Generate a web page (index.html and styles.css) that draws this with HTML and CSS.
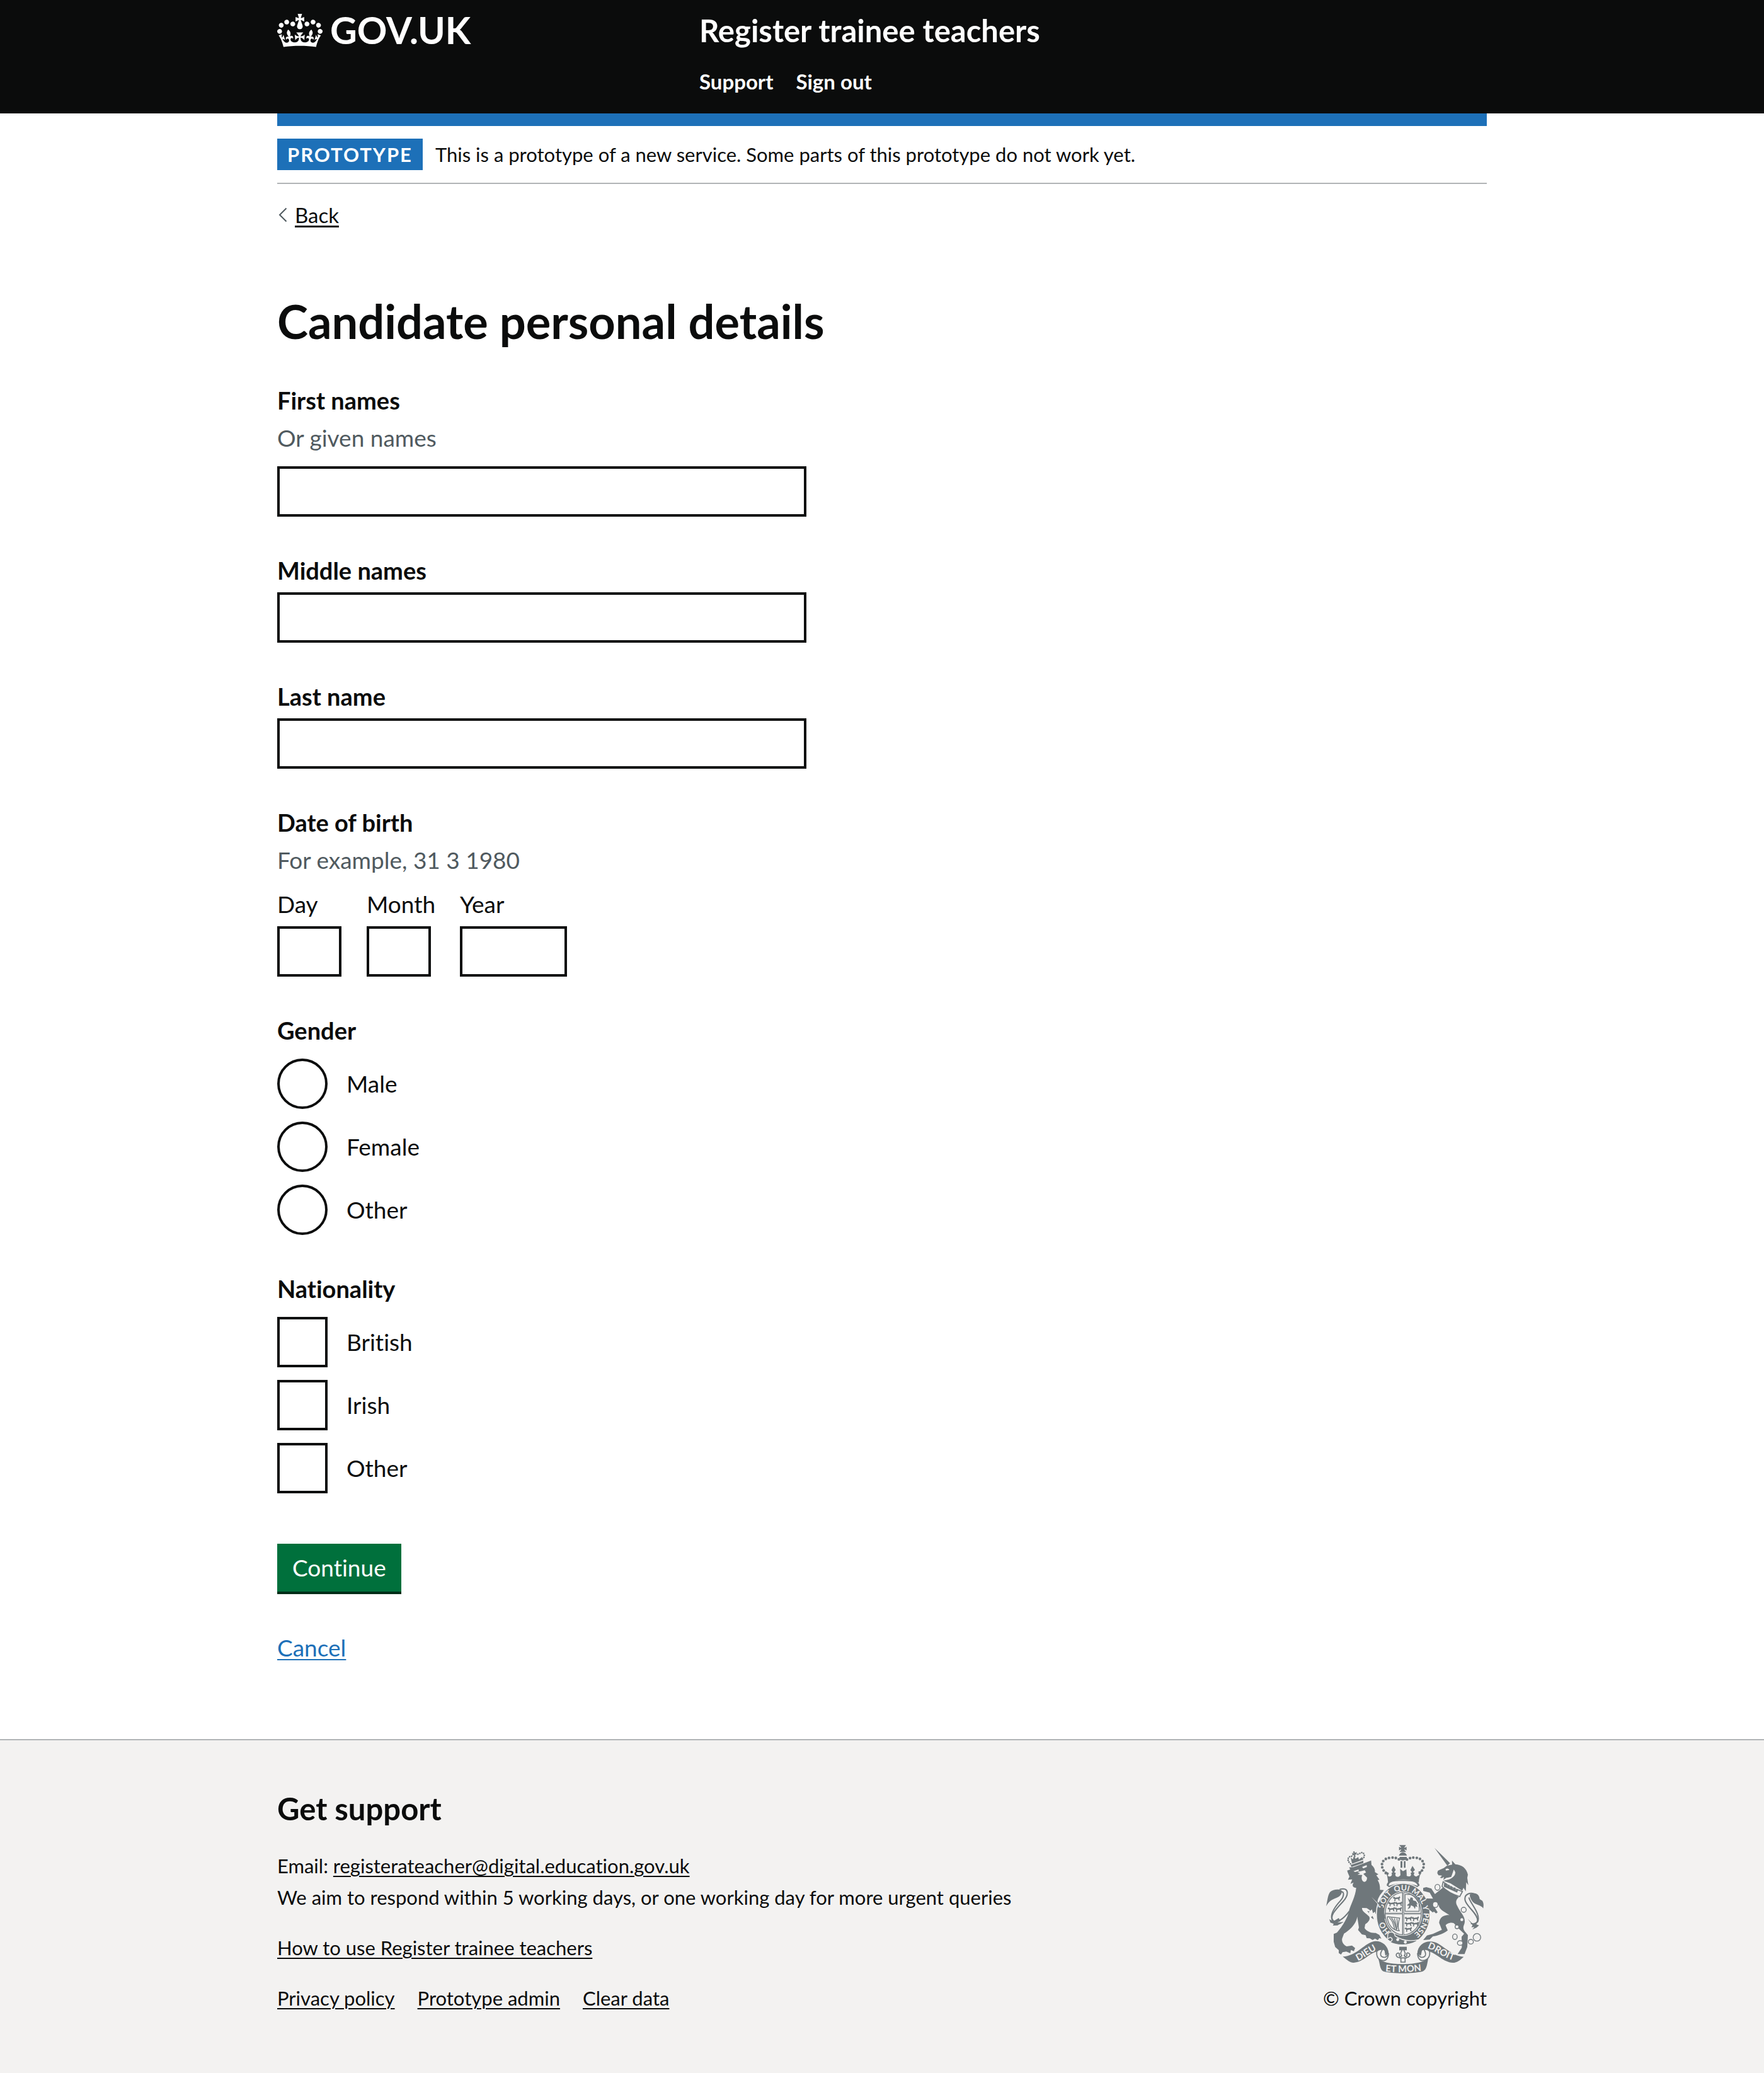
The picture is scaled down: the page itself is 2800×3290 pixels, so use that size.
FILE: index.html
```html
<!DOCTYPE html>
<html lang="en">
<head>
<meta charset="utf-8">
<meta name="viewport" content="width=device-width, initial-scale=1">
<title>Candidate personal details - Register trainee teachers</title>
<link rel="stylesheet" href="styles.css">
</head>
<body>
<header class="header">
  <div class="container header-grid">
    <a class="logo" href="#">
      <svg class="logo-crown" viewBox="0 0 132 97" aria-hidden="true"><path fill="currentColor" fill-rule="evenodd" d="M25 30.2c3.5 1.5 7.7-.2 9.1-3.7 1.5-3.6-.2-7.8-3.9-9.2-3.6-1.4-7.6.3-9.1 3.9-1.4 3.5.3 7.5 3.9 9zM9 39.5c3.6 1.5 7.8-.2 9.2-3.7 1.5-3.6-.2-7.8-3.9-9.1-3.6-1.5-7.6.2-9.1 3.8-1.4 3.5.3 7.5 3.8 9zM4.4 57.2c3.5 1.5 7.7-.2 9.1-3.8 1.5-3.6-.2-7.7-3.9-9.1-3.5-1.5-7.6.3-9.1 3.8-1.4 3.5.3 7.6 3.9 9.1zm38.3-21.4c3.5 1.5 7.7-.2 9.1-3.8 1.5-3.6-.2-7.7-3.9-9.1-3.6-1.5-7.6.3-9.1 3.8-1.3 3.6.4 7.7 3.9 9.1zm64.4-5.6c-3.6 1.5-7.8-.2-9.1-3.7-1.5-3.6.2-7.8 3.8-9.2 3.6-1.4 7.7.3 9.2 3.9 1.3 3.5-.4 7.5-3.9 9zm15.9 9.3c-3.6 1.5-7.7-.2-9.1-3.7-1.5-3.6.2-7.8 3.7-9.1 3.6-1.5 7.7.2 9.2 3.8 1.5 3.5-.3 7.5-3.8 9zm4.7 17.7c-3.6 1.5-7.8-.2-9.2-3.8-1.5-3.6.2-7.7 3.9-9.1 3.6-1.5 7.7.3 9.2 3.8 1.3 3.5-.4 7.6-3.9 9.1zM89.3 35.8c-3.6 1.5-7.8-.2-9.2-3.8-1.4-3.6.2-7.7 3.9-9.1 3.6-1.5 7.7.3 9.2 3.8 1.4 3.6-.3 7.7-3.9 9.1zM69.7 17.7l8.9 4.7V9.3l-8.9 2.8c-.2-.3-.5-.6-.9-.9L72.4 0H59.6l3.5 11.2c-.3.3-.6.5-.9.9l-8.8-2.8v13.1l8.8-4.7c.3.3.6.7.9.9l-5 15.4v.1c-.2.8-.4 1.6-.4 2.4 0 4.1 3.1 7.5 7 8.1h.2c.3 0 .7.1 1 .1.4 0 .7 0 1-.1h.2c4-.6 7.1-4.1 7.1-8.1 0-.8-.1-1.7-.4-2.4V34l-5.1-15.4c.4-.2.7-.6 1-.9zM66 92.8c16.9 0 32.8 1.1 47.1 3.2 4-16.9 8.9-26.7 14-33.5l-9.6-3.4c1 4.9 1.1 7.2 0 10.2-1.5-1.4-3-4.3-4.2-8.7L108.6 76c2.8-2 5-3.2 7.5-3.3-4.4 9.4-10 11.9-13.6 11.2-4.3-.8-6.3-4.6-5.6-7.9 1-4.7 5.7-5.9 8-.5 4.3-8.7-3-11.4-7.6-8.8 7.1-7.2 7.9-13.5 2.1-21.1-8 6.1-8.1 12.3-4.5 20.8-4.7-5.4-12.1-2.5-9.5 6.2 3.4-5.2 7.9-2 7.2 3.1-.6 4.3-6.4 7.8-13.5 7.2-10.3-.9-10.9-8-11.2-13.8 2.5-.5 7.1 1.8 11 7.3L80.2 60c-4.1 4.4-8 5.3-12.3 5.4 1.4-4.4 8-11.6 8-11.6H55.5s6.4 7.2 7.9 11.6c-4.2-.1-8-1-12.3-5.4l1.4 16.4c3.9-5.5 8.5-7.7 10.9-7.3-.3 5.8-.9 12.8-11.1 13.8-7.2.6-12.9-2.9-13.5-7.2-.7-5 3.8-8.3 7.1-3.1 2.7-8.7-4.6-11.6-9.4-6.2 3.7-8.5 3.6-14.7-4.6-20.8-5.8 7.6-5 13.9 2.2 21.1-4.7-2.6-11.9.1-7.7 8.8 2.3-5.5 7.1-4.2 8.1.5.7 3.3-1.3 7.1-5.7 7.9-3.5.7-9-1.8-13.5-11.2 2.5.1 4.7 1.3 7.5 3.3l-4.7-15.4c-1.2 4.4-2.7 7.2-4.3 8.7-1.1-3-.9-5.3 0-10.2l-9.5 3.4c5 6.9 9.9 16.7 14 33.5 14.8-2.1 30.8-3.2 47.7-3.2z"/></svg>
      <span>GOV.UK</span>
    </a>
    <div class="header-content">
      <a class="service-name" href="#">Register trainee teachers</a>
      <nav class="header-nav" aria-label="Account">
        <a href="#">Support</a>
        <a href="#">Sign out</a>
      </nav>
    </div>
  </div>
</header>
<div class="container">
  <div class="blue-bar"></div>
  <div class="phase-banner">
    <strong class="tag">PROTOTYPE</strong>
    <span>This is a prototype of a new service. Some parts of this prototype do not work yet.</span>
  </div>
  <a class="back-link" href="#"><svg class="chevron" viewBox="0 0 14 24" aria-hidden="true"><path d="M12.500 1.500L2 12L12.500 22.500"/></svg><span>Back</span></a>
  <main class="main">
    <h1>Candidate personal details</h1>
    <form class="form">
      <div class="field">
        <label class="label" for="first">First names</label>
        <div class="hint" id="first-hint">Or given names</div>
        <input class="input" id="first" type="text" aria-describedby="first-hint">
      </div>
      <div class="field">
        <label class="label" for="middle">Middle names</label>
        <input class="input" id="middle" type="text">
      </div>
      <div class="field">
        <label class="label" for="last">Last name</label>
        <input class="input" id="last" type="text">
      </div>
      <fieldset class="field">
        <legend class="label">Date of birth</legend>
        <div class="hint">For example, 31 3 1980</div>
        <div class="date">
          <div><label class="date-label" for="day">Day</label><input class="input" id="day" type="text" inputmode="numeric"></div>
          <div><label class="date-label" for="month">Month</label><input class="input input-short" id="month" type="text" inputmode="numeric"></div>
          <div><label class="date-label" for="year">Year</label><input class="input" id="year" type="text" inputmode="numeric"></div>
        </div>
      </fieldset>
      <fieldset class="field">
        <legend class="label">Gender</legend>
        <div class="options">
          <label class="option"><input class="radio" type="radio" name="gender"><span>Male</span></label>
          <label class="option"><input class="radio" type="radio" name="gender"><span>Female</span></label>
          <label class="option"><input class="radio" type="radio" name="gender"><span>Other</span></label>
        </div>
      </fieldset>
      <fieldset class="field">
        <legend class="label">Nationality</legend>
        <div class="options">
          <label class="option"><input class="checkbox" type="checkbox" name="nationality"><span>British</span></label>
          <label class="option"><input class="checkbox" type="checkbox" name="nationality"><span>Irish</span></label>
          <label class="option"><input class="checkbox" type="checkbox" name="nationality"><span>Other</span></label>
        </div>
      </fieldset>
      <div class="actions">
        <button class="button" type="submit">Continue</button>
        <a class="cancel" href="#">Cancel</a>
      </div>
    </form>
  </main>
</div>
<footer class="footer">
  <div class="container footer-row">
    <div class="footer-text">
      <h2>Get support</h2>
      <p>Email: <a href="#">registerateacher@digital.education.gov.uk</a><br>We aim to respond within 5 working days, or one working day for more urgent queries</p>
      <p><a href="#">How to use Register trainee teachers</a></p>
      <div class="footer-links">
        <a href="#">Privacy policy</a>
        <a href="#">Prototype admin</a>
        <a href="#">Clear data</a>
      </div>
    </div>
    <a class="copyright" href="#">
      <svg class="arms" viewBox="132 84 750 612" aria-hidden="true">
        <defs>
          <path id="garter" d="M499 523A97 111 0 0 1 499 301A97 111 0 0 1 499 523"/>
          <path id="dieu" d="M270 641C310 628 335 600 386 577"/>
          <path id="mon" d="M400 685Q497 696 600 681"/>
          <path id="droit" d="M604 573C650 584 690 622 746 636"/>
          <g id="passant"><path d="M0 8l7-6 5 5 16-2 5-5 3 7-4 4v8l5 2h-9l-2-8-12 1-2 6 3 3h-8l2-9-4-2z"/></g>
        </defs>
        <!-- lion -->
        <path class="line" d="M196 296C244 283 240 323 212 354C170 399 149 424 164 443C178 460 212 440 242 400"/>
        <path class="line" d="M190 312C224 294 218 329 200 350C166 387 145 424 166 452"/>
        <path d="M132 376C138 352 139 325 150 309C166 293 193 294 205 300C211 315 198 330 183 335C157 344 143 355 132 376ZM147 438L166 448L192 432L200 447L185 454L215 451C202 461 191 464 187 467L164 468L168 460L152 454Z"/>
        <path d="M232 206L247 201L241 191L262 190L300 176L346 158L348 179C362 190 366 205 364 213L381 224L371 229L386 250L377 251C388 268 389 285 388 298L407 299L388 324C380 338 374 350 378 358L395 379L411 420L409 442L397 436L390 445L380 436L372 442L368 430L356 437L345 428L357 420L339 412L328 400L345 398L325 385L303 384C301 400 322 410 337 425C345 440 329 455 318 462L315 480C325 495 345 505 368 503L385 512L395 530L385 528L378 538L365 530L353 537L340 529L325 528L320 514L302 510L284 489L288 477L280 425C276 460 245 490 217 506L208 530C205 545 215 560 230 567L255 563L270 575L264 590L250 584L247 600L228 592L210 595L203 606L192 599L192 585L175 570L168 545L168 508L183 502C203 480 237 430 241 397C248 370 272 330 275 288C262 288 252 280 263 263L248 269L256 248L236 250L243 235L235 216Z"/>
        <g class="cut">
          <path d="M262 209L286 201L288 208L270 213ZM303 189L325 180L326 189L309 196ZM281 213L316 205L322 215L309 222L327 240Q326 260 313 260Q300 256 301 237L304 227L281 226L294 219Z"/>
          <path d="M347 331L401 384L413 418L405 418L394 384ZM332 387L338 402L350 391L355 409L365 402L367 413L375 399L391 421L383 439L369 434L358 435L352 420L338 415Z"/>
        </g>
        <path d="M248 180L309 159L309 170L253 189ZM260 116l7-2 2 8 9-4-2 14-6-4 2 14-5 1-4-12-6 5-1-15 7 5zM252 159l-3-15 10 9 5-16 8 13 13-8 3 12 16-13 1 14-49 18z"/>
        <path class="pearls small" d="M248 174C230 158 234 142 251 137L261 143M305 151C318 142 316 124 303 120L282 129"/>
        <!-- crown -->
        <path d="M480 85h32l-7 10v3l10-5v17l-10-5v3l8 10h-32l8-10v-3l-10 5v-17l10 5v-3zM478 135q5-15 19-16 15 1 20 16zM482 141h34v13l-19 4-17-4zM486 161h9v32h-9zM502 161h8v32h-8z"/>
        <path class="pearls" d="M416 218C389 193 388 150 438 145C463 143 473 149 480 154M578 218C606 193 606 150 558 145C533 143 524 149 516 154"/>
        <path d="M411 207C423 222 425 241 427 264Q497 233 573 263Q574 232 589 207L571 211L577 226L561 235C549 232 547 225 553 217L545 213L555 203L543 184L533 204L541 214L534 218C541 229 531 239 516 232L506 220L516 231L514 200L498 209L484 198L486 231L493 221L479 235C467 239 456 230 464 218L456 214L463 203L453 184L443 204L449 214L443 218C450 230 437 239 425 232L431 218Z"/>
        <path d="M420 277C424 249 455 250 497 250C540 250 570 249 577 277L565 286Q500 256 432 286Z"/>
        <path class="cut" d="M430 279C430 257 459 256 497 256C534 256 564 257 568 279Q497 253 430 279Z"/>
        <!-- garter and shield -->
        <ellipse class="halo" cx="499" cy="415" rx="128" ry="148"/>
        <ellipse class="cut" cx="499" cy="411" rx="91" ry="106"/>
        <ellipse cx="499" cy="411" rx="88" ry="103"/>
        <ellipse class="cut" cx="499" cy="411" rx="84" ry="99"/>
        <path d="M494 309h9v204h-9zM414 407h170v8H414z"/>
        <path class="cut" d="M498 309h2v204h-2zM414 410h170v2H414z"/>
        <g>
          <use href="#passant" x="449" y="328"/><use href="#passant" x="426" y="353"/><use href="#passant" x="459" y="353"/><use href="#passant" x="424" y="379"/><use href="#passant" x="457" y="379"/>
          <use href="#passant" x="505" y="424"/><use href="#passant" x="538" y="424"/><use href="#passant" x="505" y="449"/><use href="#passant" x="538" y="449"/><use href="#passant" x="505" y="474"/>
          <path class="thin" d="M508 320V400H575V359Q560 328 534 320ZM423 426L482 432C475 455 470 478 480 493C450 492 425 464 423 426M433 431C447 443 450 455 459 488M443 432C455 444 458 458 467 489M457 434L470 485M469 435L473 476"/>
          <path d="M520 336l10 10 4-12 10 2 2 12 13 4 11 17-8-5 5 17-9-5-3 13-7-12-12-6-4 12-12 8 8-17-12-2 13-11z"/>
        </g>
        <path class="buckle" d="M426 506C440 492 458 500 460 517C496 542 535 543 570 536C545 561 475 569 435 546C450 541 450 528 437 524L424 531Z"/>
        <circle class="cut" cx="473" cy="535" r="7"/><circle class="cut" cx="509" cy="547" r="7"/>
        <g class="motto">
          <text><textPath href="#garter" startOffset="15%">HO</textPath></text>
          <text><textPath href="#garter" startOffset="35%">SOIT</textPath></text>
          <text><textPath href="#garter" startOffset="49%">QUI</textPath></text>
          <text><textPath href="#garter" startOffset="62%">MAL</textPath></text>
          <text><textPath href="#garter" startOffset="71%">Y</textPath></text>
          <text><textPath href="#garter" startOffset="83%">PENSE</textPath></text>
        </g>
        <path class="line" d="M378 358L401 384L411 435"/>
        <!-- unicorn -->
        <path d="M648 98L722 171L709 183Z"/>
        <path class="line" d="M873 354C844 365 811 336 821 317M852 326C820 303 787 318 794 349C801 378 853 410 853 443Q849 467 821 458"/>
        <path class="line" d="M812 334C816 361 873 414 852 453"/>
        <path d="M821 317C854 307 862 330 863 342L876 350C883 361 882 374 880 386C870 369 842 371 829 354C818 341 818 331 821 317ZM806 436L830 460L854 448L847 462L860 467L848 478L828 487L838 475L824 476L829 466Z"/>
        <path d="M661 218L664 207L692 194L707 183L732 178L731 158L747 176C777 178 801 194 807 226L804 241L809 276L799 262L797 305L786 288L780 302L724 267L690 255C720 247 748 238 747 214L740 201L727 239L704 241L690 251L693 236L684 242L674 241L684 230L667 229Z"/>
        <path class="cut" d="M700 200Q712 192 719 203L703 206ZM740 205Q750 236 716 249L700 251L707 241L728 236Z"/>
        <path d="M690 286L764 333C749 345 747 359 757 376C773 412 803 429 788 466C778 490 800 501 807 514L804 570L791 604L758 604L778 573L777 521L789 507L766 485L740 457C725 450 704 460 701 467L711 491C689 509 660 516 640 520L625 535L594 537L612 515L640 508L683 488L670 455C672 430 690 417 719 418C700 405 669 393 668 370L643 372L663 405L655 410L645 401L640 406L625 394L606 349L611 339L641 340L625 311L594 303L594 289L609 285L633 292L650 318Z"/>
        <path class="edge" d="M689 260Q729 290 781 306L768 330Q716 314 684 282Z"/>
        <path d="M694 265l8 5 4-3 2 11 10-4 3 12 9-7 5 14 11-8 3 14 12-5-5 17-64-28z"/>
        <g class="chain"><ellipse cx="662" cy="286" rx="12" ry="14"/><ellipse cx="652" cy="368" rx="13" ry="14"/><circle cx="787" cy="393" r="12"/><circle cx="778" cy="440" r="9"/><circle cx="755" cy="474" r="9"/><ellipse cx="745" cy="521" rx="11" ry="13"/><ellipse cx="770" cy="551" rx="13" ry="11"/><ellipse cx="821" cy="545" rx="12" ry="11"/><circle cx="850" cy="524" r="18"/></g>
        <!-- ribbon -->
        <path d="M211 616C275 612 310 558 352 545C386 535 427 556 430 602L414 611L410 588C399 578 382 582 373 592C334 602 310 642 263 645C242 645 230 630 211 616Z"/>
        <path d="M787 617C727 612 690 560 648 547C612 535 568 555 566 602L583 611L588 588C600 578 616 584 625 592C660 603 690 642 735 645C756 645 770 632 787 617Z"/>
        <path class="edge" d="M373 592Q382 579 400 582Q384 607 397 616Q418 628 429 600Q426 646 389 631Q370 620 373 592ZM625 592Q616 579 598 582Q612 607 600 616Q580 628 567 600Q570 646 607 631Q628 620 625 592Z"/>
        <path d="M380 625C397 641 432 651 497 652C562 651 602 641 619 622C613 647 612 679 592 686C546 698 448 698 405 686C387 679 389 650 380 625Z"/>
        <path d="M480 569h36v17h-36z"/>
        <path class="edge" d="M498 578C484 600 485 603 492 612C487 619 480 617 480 606C485 600 472 594 466 605C463 615 475 621 480 620L488 624V642H508V624L516 620C527 620 535 609 528 602C520 594 511 601 517 608C514 618 508 617 504 611C513 602 507 594 498 578ZM481 622H516"/>
        <g class="motto motto-large">
          <text><textPath href="#dieu" startOffset="50%">DIEU</textPath></text>
          <text><textPath href="#mon" startOffset="50%">ET MON</textPath></text>
          <text><textPath href="#droit" startOffset="50%">DROIT</textPath></text>
        </g>
      </svg>
      <span>© Crown copyright</span>
    </a>
  </div>
</footer>
</body>
</html>
```
FILE: styles.css
```css
* { box-sizing: border-box; }

body {
  margin: 0;
  background: #fff;
  color: #0b0c0c;
  font-family: Lato, "Liberation Sans", sans-serif;
  font-size: 37px;
  font-variant-ligatures: none;
  line-height: 50px;
}

.container {
  max-width: 1980px;
  margin: 0 auto;
  padding: 0 30px;
}

/* Header */
.header {
  min-height: 180px;
  background: #0b0c0c;
  color: #fff;
}
.header a { color: inherit; text-decoration: none; }
.header-grid {
  display: grid;
  grid-template-columns: 1fr 2fr;
  gap: 45px;
  padding-top: 18px;
}
.logo {
  display: flex;
  align-items: center;
  align-self: start;
  gap: 12px;
  font-size: 59px;
  line-height: 60px;
  font-weight: 700;
}
.logo-crown { width: 72px; height: 53px; }
.service-name {
  display: block;
  font-size: 49px;
  line-height: 60px;
  font-weight: 700;
}
.header-nav {
  display: flex;
  gap: 36px;
  margin-top: 26px;
  font-size: 33px;
  line-height: 50px;
  font-weight: 700;
}

/* Banner */
.blue-bar { height: 20px; background: #1d70b8; }
.phase-banner {
  display: flex;
  align-items: center;
  gap: 20px;
  padding: 20px 0;
  border-bottom: 2px solid #b1b4b6;
  font-size: 31px;
}
.tag {
  padding: 0 16px;
  background: #1d70b8;
  color: #fff;
  letter-spacing: 2px;
}
.back-link {
  display: inline-flex;
  align-items: center;
  gap: 12px;
  margin-top: 24px;
  padding-left: 2px;
  color: inherit;
  font-size: 33px;
  text-decoration: none;
}
.back-link span { text-decoration: underline; }
.chevron {
  width: 14px;
  height: 24px;
  fill: none;
  stroke: #505a5f;
  stroke-width: 2;
}

a {
  text-decoration-thickness: 2px;
  text-underline-offset: 4px;
}

/* Form */
.main { padding: 104px 0 120px; }
h1 {
  margin: 0 0 60px;
  font-size: 74px;
  line-height: 80px;
  font-weight: 700;
}
.form { display: flex; flex-direction: column; gap: 60px; }
.field { min-width: 0; margin: 0; padding: 0; border: 0; }
.label { display: block; padding: 0; margin-bottom: 10px; font-size: 38px; font-weight: 700; }
.hint { margin-bottom: 20px; color: #505a5f; }
.input {
  display: block;
  width: 100%;
  max-width: 840px;
  height: 80px;
  padding: 0 10px;
  border: 4px solid #0b0c0c;
  border-radius: 0;
  background: #fff;
  font: inherit;
}
.date {
  display: grid;
  grid-template-columns: 102px 108px 170px;
  gap: 40px;
}
.date-label { display: block; margin-bottom: 10px; }
.input-short { max-width: 102px; }
.options { display: grid; gap: 20px; padding-top: 10px; }
.option { display: flex; align-items: center; gap: 30px; justify-self: start; }
.radio, .checkbox {
  appearance: none;
  width: 80px;
  height: 80px;
  margin: 0;
  border: 4px solid #0b0c0c;
  background: #fff;
}
.radio { border-radius: 50%; }
.radio:checked { box-shadow: inset 0 0 0 16px #fff, inset 0 0 0 40px #0b0c0c; }
.checkbox:checked { box-shadow: inset 0 0 0 12px #fff, inset 0 0 0 40px #0b0c0c; }
.actions {
  display: flex;
  flex-direction: column;
  align-items: flex-start;
  gap: 60px;
  padding-top: 20px;
}
.button {
  height: 80px;
  padding: 0 24px 4px;
  border: 0;
  background: #00703c;
  box-shadow: inset 0 -4px 0 #002d18;
  color: #fff;
  font: inherit;
}
.cancel { color: #1d70b8; }

/* Footer */
.footer {
  padding: 78px 0 94px;
  border-top: 2px solid #b1b4b6;
  background: #f3f2f1;
  font-size: 31px;
}
.footer a { color: inherit; }
.footer-row { display: flex; justify-content: space-between; align-items: flex-end; gap: 60px; }
h2 { margin: 0 0 36px; font-size: 49px; line-height: 60px; font-weight: 700; }
.footer p { margin: 0 0 30px; }
.footer-links { display: flex; flex-wrap: wrap; gap: 36px; }
.copyright {
  display: flex;
  flex-direction: column;
  align-items: center;
  gap: 14px;
  flex: none;
}
.footer .copyright { text-decoration: none; }

/* Coat of arms */
.arms { width: 250px; height: 204px; fill: #6f777b; }
.arms .cut { fill: #f3f2f1; }
.arms .line { fill: none; stroke: #6f777b; stroke-width: 6; }
.arms .thin { fill: none; stroke: #6f777b; stroke-width: 4; }
.arms .halo { stroke: #f3f2f1; stroke-width: 5; }
.arms .edge { fill: #f3f2f1; stroke: #6f777b; stroke-width: 5; }
.arms .buckle { fill: #6f777b; stroke: #f3f2f1; stroke-width: 4; }
.arms .chain { fill: #f3f2f1; stroke: #6f777b; stroke-width: 4; }
.arms .pearls {
  fill: none;
  stroke: #6f777b;
  stroke-width: 13;
  stroke-linecap: round;
  stroke-dasharray: 0 16;
}
.arms .small { stroke-width: 8; stroke-dasharray: 0 10; }
.motto {
  fill: #f3f2f1;
  font-size: 37px;
  font-weight: 700;
  text-anchor: middle;
}
.motto-large { font-size: 44px; }
```
